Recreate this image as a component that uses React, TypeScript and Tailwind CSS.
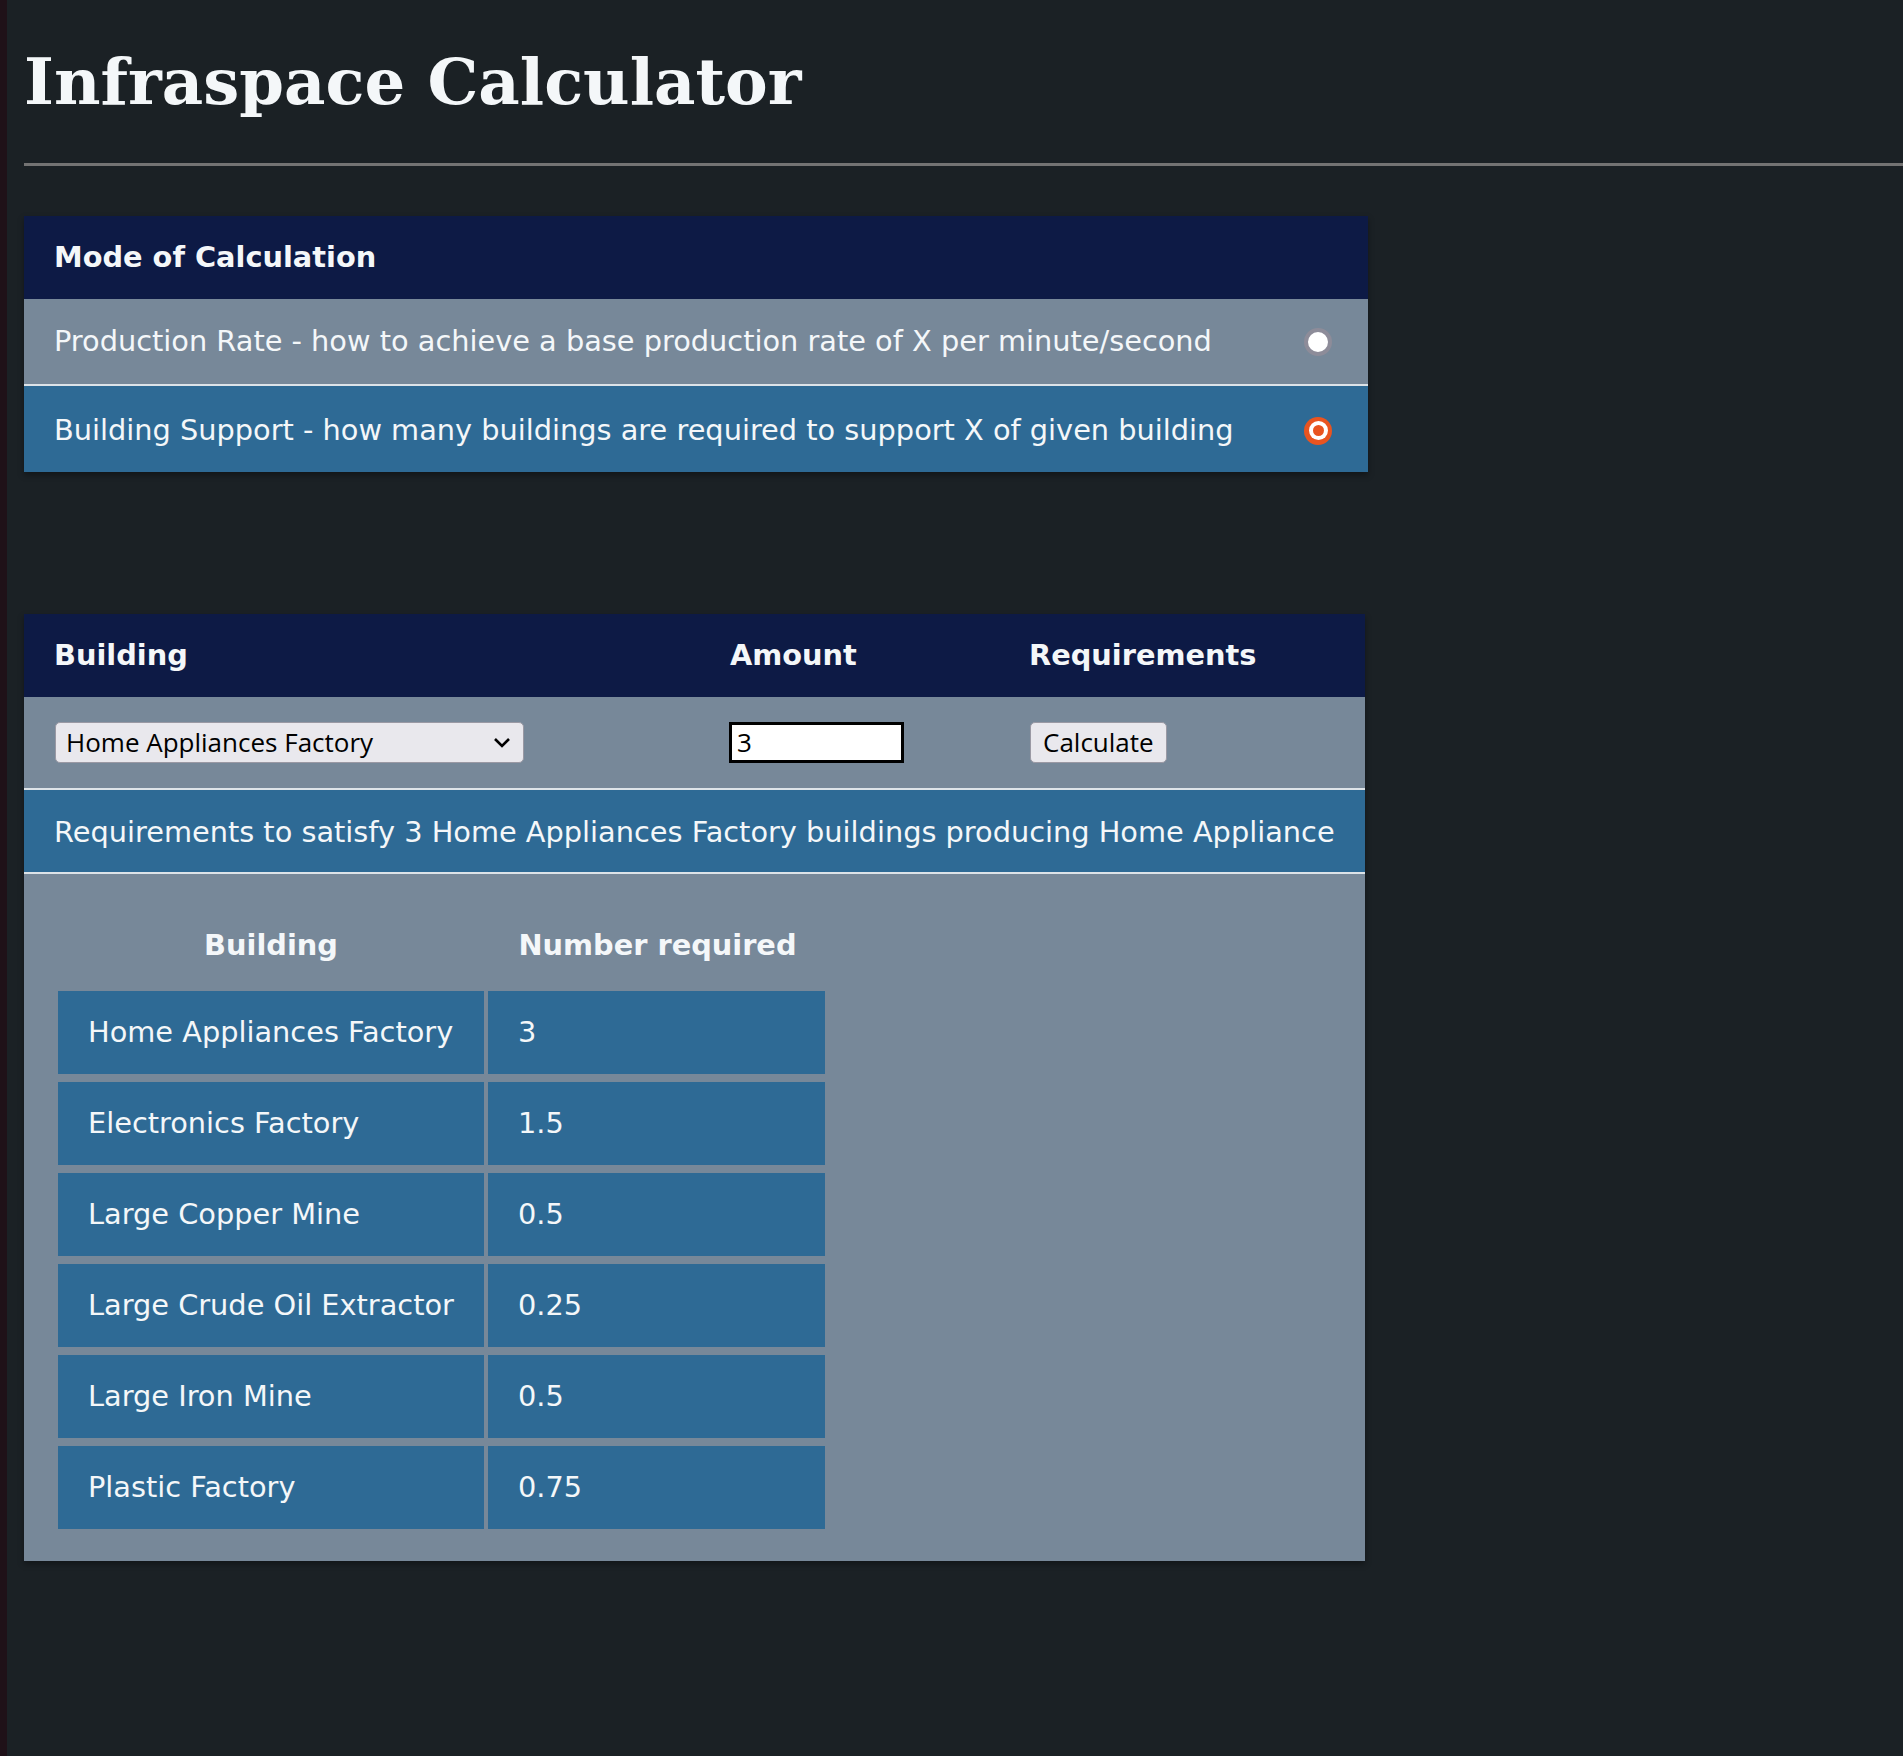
import { useState } from 'react'

const results = [
  { name: 'Home Appliances Factory', count: '3' },
  { name: 'Electronics Factory', count: '1.5' },
  { name: 'Large Copper Mine', count: '0.5' },
  { name: 'Large Crude Oil Extractor', count: '0.25' },
  { name: 'Large Iron Mine', count: '0.5' },
  { name: 'Plastic Factory', count: '0.75' },
]

function Radio({ checked }: { checked: boolean }) {
  if (checked) {
    return (
      <span className="flex h-[28px] w-[28px] items-center justify-center rounded-full bg-[#e95420]">
        <span className="flex h-[19px] w-[19px] items-center justify-center rounded-full bg-white">
          <span className="h-[11px] w-[11px] rounded-full bg-[#e95420]" />
        </span>
      </span>
    )
  }
  return <span className="h-[28px] w-[28px] rounded-full border-4 border-[#8d8c99] bg-white" />
}

export default function App() {
  const [mode, setMode] = useState<'rate' | 'support'>('support')

  const modes = [
    { id: 'rate' as const, label: 'Production Rate - how to achieve a base production rate of X per minute/second' },
    { id: 'support' as const, label: 'Building Support - how many buildings are required to support X of given building' },
  ]

  return (
    <div className="flex min-h-[1756px] bg-[#1b2125] text-[#f4f7f9]">
      <div className="w-[7px] shrink-0 bg-[#1f1118]" />
      <main className="flex-1 pl-[17px] pt-[45px] font-['DejaVu_Sans',sans-serif] text-[28.8px]">
        <h1 className="font-['DejaVu_Serif',serif] text-[64px] font-bold leading-[74px]">Infraspace Calculator</h1>
        <hr className="mt-[44px] border-0 border-t-[3px] border-[#737373]" />

        <section className="mt-[50px] w-[1344px] shadow-[0_3px_6px_rgba(0,0,0,0.35)]">
          <div className="flex h-[83px] items-center bg-[#0d1a45] px-[30px] font-bold">Mode of Calculation</div>
          {modes.map((m, i) => (
            <div
              key={m.id}
              onClick={() => setMode(m.id)}
              className={
                i === 0
                  ? `flex h-[85px] cursor-pointer items-center justify-between pl-[30px] pr-[36px] pt-[1px] ${mode === m.id ? 'bg-[#2e6a95]' : 'bg-[#778899]'}`
                  : `flex h-[88px] cursor-pointer items-center justify-between border-t-2 border-[#dde3e8] pl-[30px] pr-[36px] pt-[3px] ${mode === m.id ? 'bg-[#2e6a95]' : 'bg-[#778899]'}`
              }
            >
              <span>{m.label}</span>
              <Radio checked={mode === m.id} />
            </div>
          ))}
        </section>

        <section className="mt-[142px] w-[1341px] shadow-[0_3px_6px_rgba(0,0,0,0.35)]">
          <div className="flex h-[83px] items-center bg-[#0d1a45] font-bold">
            <div className="w-[678px] pl-[30px]">Building</div>
            <div className="w-[300px] pl-[28px]">Amount</div>
            <div className="pl-[27px]">Requirements</div>
          </div>
          <div className="flex h-[91px] items-center bg-[#778899] font-['Open_Sans',sans-serif] text-[26px] text-black">
            <div className="w-[678px] pl-[31px]">
              <div className="flex h-[41px] w-[469px] items-center justify-between rounded-[5px] border border-[#9a99a4] bg-[#e9e8ed] pl-[10px] pr-[12px]">
                <span>Home Appliances Factory</span>
                <svg width="18" height="11" viewBox="0 0 18 11" fill="none" stroke="black" strokeWidth="2.6">
                  <path d="M2 2l7 7 7-7" />
                </svg>
              </div>
            </div>
            <div className="w-[300px] pl-[27px]">
              <div className="flex h-[41px] w-[175px] items-center border-[3px] border-black bg-white pl-[5px]">3</div>
            </div>
            <div className="pl-[28px]">
              <button className="h-[41px] rounded-[5px] border border-[#9a99a4] bg-[#e9e8ed] px-[12px]">Calculate</button>
            </div>
          </div>
          <div className="flex h-[84px] items-center border-t-2 border-[#dde3e8] bg-[#2e6a95] pl-[30px] pt-[3px]">
            Requirements to satisfy 3 Home Appliances Factory buildings producing Home Appliance
          </div>
          <div className="border-t-2 border-[#dde3e8] bg-[#778899] pb-[32px] pl-[34px] pt-[29px]">
            <div className="grid grid-cols-[426px_337px] gap-x-[4px] gap-y-[8px]">
              <div className="flex h-[80px] items-center justify-center pt-[6px] font-bold">Building</div>
              <div className="flex h-[80px] items-center justify-center pl-[2px] pt-[6px] font-bold">Number required</div>
              {results.map((r) => (
                <>
                  <div key={r.name} className="flex h-[83px] items-center bg-[#2e6a95] pl-[30px]">{r.name}</div>
                  <div key={r.name + '-n'} className="flex h-[83px] items-center bg-[#2e6a95] pl-[30px]">{r.count}</div>
                </>
              ))}
            </div>
          </div>
        </section>
      </main>
    </div>
  )
}
